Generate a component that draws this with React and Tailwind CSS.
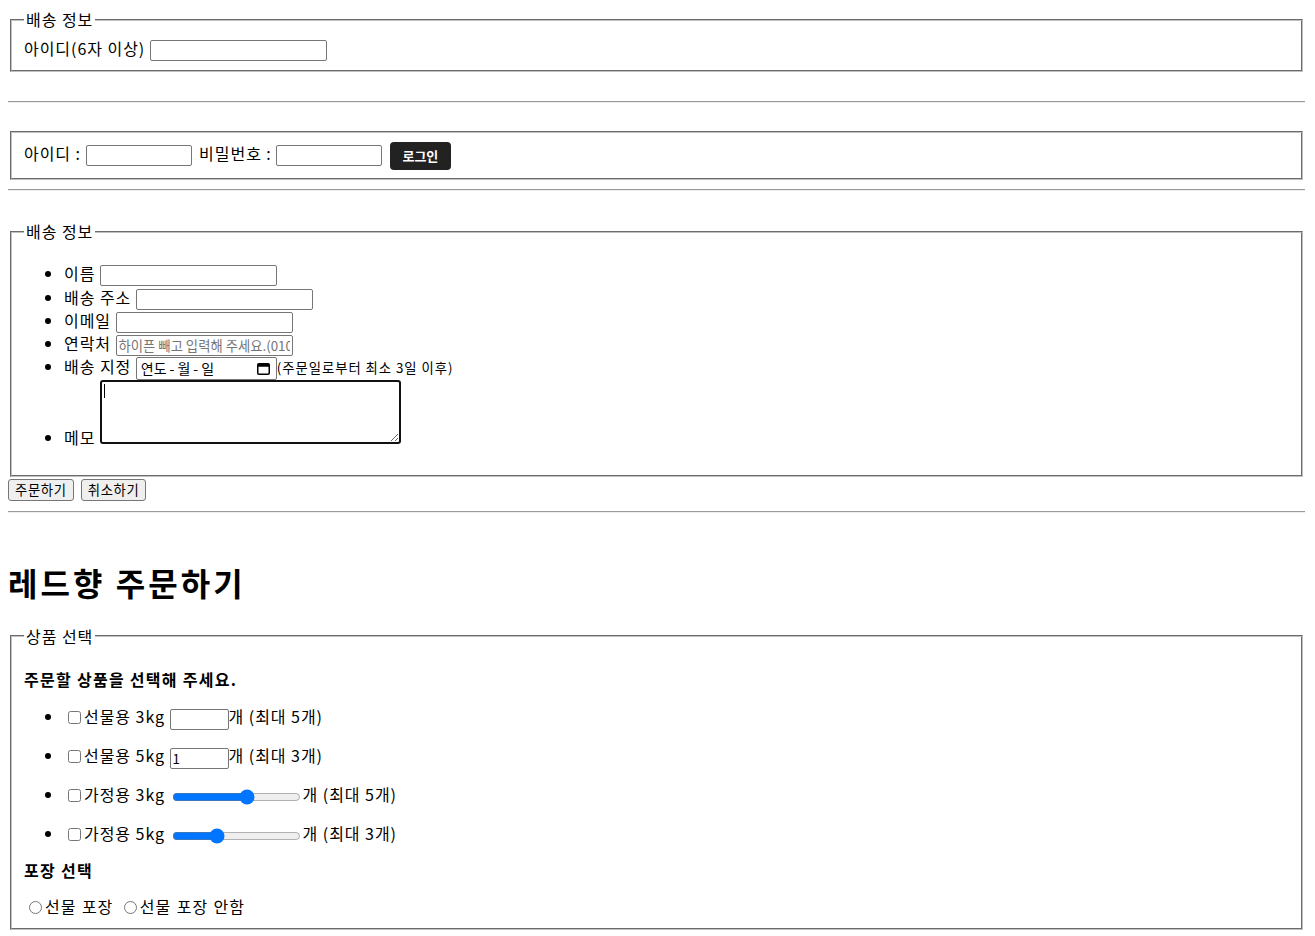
import React from 'react';

const field = "mx-[2px] px-3 pt-[5.6px] pb-[10px] border-2 [border-style:groove] border-[#c0c0c0] min-w-0";
const textInput = "inline-block align-middle h-[21px] border border-[#767676] rounded-[2px] px-[2px] text-[13.33px] leading-[17px] tracking-normal bg-white outline-none";
const rule = "h-[2px] border-0 border-t border-t-[#9a9a9a] border-b border-b-[#eeeeee]";

const CalendarIcon = () => (
  <svg width="15" height="15" viewBox="0 0 15 15" className="shrink-0">
    <rect x="1.75" y="2.75" width="11.5" height="10.5" rx="1.2" fill="none" stroke="#000" strokeWidth="1.5" />
    <rect x="1.75" y="2.75" width="11.5" height="3" fill="#000" />
  </svg>
);

const Product = ({ name, children, first }) => (
  <li className={first ? 'h-[23px]' : 'mt-4 h-[23px]'}>
    <input type="checkbox" className="ml-1 mr-[3px] w-[13px] h-[13px] align-[-1px]" />
    {name} {children}
  </li>
);

export default function App() {
  return (
    <div className="w-[1297px] mx-2 pt-2 pb-2 text-black text-base leading-[23px] tracking-[0.06em] font-['Noto_Sans_CJK_KR','Noto_Sans',sans-serif]">
      <form>
        <fieldset className={field}>
          <legend className="px-[2px]">배송 정보</legend>
          <div className="h-[23px]">
            아이디(6자 이상) <input type="text" className={`${textInput} w-[177px]`} />
          </div>
        </fieldset>
      </form>

      <hr className={`${rule} mt-[29px]`} />

      <form className="mt-[28px]">
        <fieldset className={field}>
          <div className="leading-[30px] h-[30px]">
            아이디 : <input type="text" className={`${textInput} w-[106px]`} />{' '}
            <span className="ml-[3px]">비밀번호 :</span>{' '}
            <input type="password" className={`${textInput} w-[106px]`} />{' '}
            <button type="button" className="inline-block align-middle ml-[3px] w-[61px] h-[28px] rounded-[4px] bg-[#222222] text-white text-[13px] font-bold leading-[28px] tracking-normal">
              로그인
            </button>
          </div>
        </fieldset>
      </form>

      <hr className={`${rule} mt-[9px]`} />

      <form className="mt-[29px]">
        <fieldset className={field}>
          <legend className="px-[2px]">배송 정보</legend>
          <ul className="list-disc pl-10 mt-[13px] mb-4">
            <li className="h-[24px]">
              이름 <input type="text" className={`${textInput} w-[177px]`} />
            </li>
            <li className="h-[23px]">
              배송 주소 <input type="text" className={`${textInput} w-[177px]`} />
            </li>
            <li className="h-[23px]">
              이메일 <input type="email" className={`${textInput} w-[177px]`} />
            </li>
            <li className="h-[23px]">
              연락처{' '}
              <input
                type="tel"
                placeholder="하이픈 빼고 입력해 주세요.(01012345678)"
                className={`${textInput} w-[177px] tracking-[0.06em] placeholder:text-[#757575]`}
              />
            </li>
            <li className="h-[23px]">
              배송 지정{' '}
              <span className="inline-flex align-middle items-center justify-between w-[141px] h-[23px] border border-[#767676] rounded-[2px] pl-[4px] pr-[5px] text-[14px] leading-[20px] tracking-normal bg-white">
                <span>
                  연도<span className="mx-[3px]">-</span>월<span className="mx-[3px]">-</span>일
                </span>
                <CalendarIcon />
              </span>
              <small className="text-[13.33px]">(주문일로부터 최소 3일 이후)</small>
            </li>
            <li>
              메모{' '}
              <span className="relative inline-block mt-[2px]">
                <textarea className="block w-[301px] h-[64px] border-2 border-[#111111] rounded-[3px] p-[2px] text-[13.33px] outline-none" />
                <span className="absolute left-[4px] top-[4px] w-px h-[14px] bg-black" />
              </span>
            </li>
          </ul>
        </fieldset>
        <div className="flex gap-[7px] mt-[2px]">
          <button type="button" className="h-[22px] px-[6px] border border-[#767676] rounded-[3px] bg-[#efefef] text-[13.33px] leading-[18px] tracking-[0.05em]">
            주문하기
          </button>
          <button type="button" className="h-[22px] px-[6px] border border-[#767676] rounded-[3px] bg-[#efefef] text-[13.33px] leading-[18px] tracking-[0.05em]">
            취소하기
          </button>
        </div>
      </form>

      <hr className={`${rule} mt-[10px]`} />

      <h1 className="mt-[46px] text-[32px] leading-[46px] font-bold tracking-[0.095em]">레드향 주문하기</h1>

      <form className="mt-[20px]">
        <fieldset className={field}>
          <legend className="px-[2px]">상품 선택</legend>
          <p className="mt-[15px] font-bold tracking-[0.08em]">주문할 상품을 선택해 주세요.</p>
          <ul className="list-disc pl-10 mt-[14px]">
            <Product name="선물용 3kg" first>
              <input type="number" min="0" max="5" className={`${textInput} w-[59px]`} />개 (최대 5개)
            </Product>
            <Product name="선물용 5kg">
              <input type="number" min="0" max="3" defaultValue="1" className={`${textInput} w-[59px]`} />개 (최대 3개)
            </Product>
            <Product name="가정용 3kg">
              <input type="range" min="0" max="5" defaultValue="3" className="mx-[2px] w-[129px] align-middle accent-[#0075ff]" />개 (최대 5개)
            </Product>
            <Product name="가정용 5kg">
              <input type="range" min="0" max="3" defaultValue="1" className="mx-[2px] w-[129px] align-middle accent-[#0075ff]" />개 (최대 3개)
            </Product>
          </ul>
          <p className="mt-[14px] font-bold tracking-[0.08em]">포장 선택</p>
          <div className="mt-[13px] [word-spacing:1px]">
            <label>
              <input type="radio" name="wrap" className="ml-[5px] mr-[3px] w-[13px] h-[13px] align-[-1px]" />
              선물 포장
            </label>{' '}
            <label>
              <input type="radio" name="wrap" className="ml-[5px] mr-[3px] w-[13px] h-[13px] align-[-1px]" />
              선물 포장 안함
            </label>
          </div>
        </fieldset>
      </form>
    </div>
  );
}
